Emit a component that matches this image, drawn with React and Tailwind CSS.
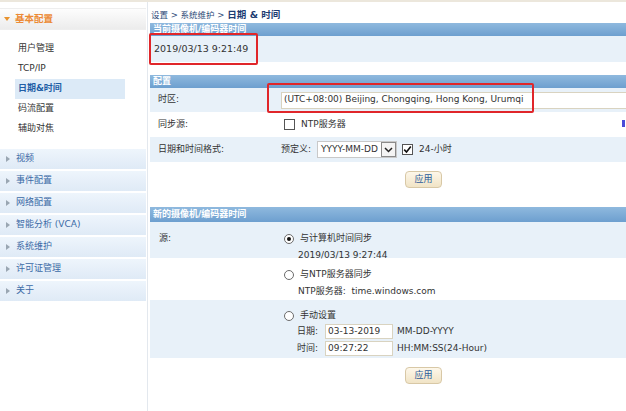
import React from "react";

const font = { fontFamily: '"DejaVu Sans", Verdana, "Noto Sans CJK SC", sans-serif' };

function SideSection({ label }) {
  return (
    <div className="h-[20px] mb-[2px] flex items-center bg-gradient-to-b from-[#eef5fc] to-[#dfeaf6] pl-[6px]">
      <span className="w-0 h-0 border-y-[3px] border-y-transparent border-l-[4px] border-l-[#9aa6b2] mr-[6px]" />
      <span className="text-[9px] text-[#3b6aa6]">{label}</span>
    </div>
  );
}

function Header({ children, h = "h-[14px]" }) {
  return (
    <div className={`${h} flex items-center bg-gradient-to-b from-[#8fb9de] to-[#6d9fcf] pl-[3px] text-[9px] font-bold text-white leading-none`}>
      {children}
    </div>
  );
}

function Radio({ checked }) {
  return (
    <span className="w-[10px] h-[10px] rounded-full border border-[#6b6b6b] bg-white flex items-center justify-center shrink-0">
      {checked && <span className="w-[4px] h-[4px] rounded-full bg-[#111]" />}
    </span>
  );
}

function Checkbox({ checked }) {
  return (
    <span className="w-[11px] h-[11px] border border-[#555] bg-white flex items-center justify-center shrink-0">
      {checked && (
        <svg width="9" height="9" viewBox="0 0 9 9">
          <path d="M1.2 4.6 L3.5 7 L7.8 1.5" fill="none" stroke="#111" strokeWidth="1.6" />
        </svg>
      )}
    </span>
  );
}

function ApplyBtn() {
  return (
    <div className="flex pl-[255px]">
      <div className="w-[37px] h-[17px] rounded-[4px] border border-[#d8c8a6] bg-gradient-to-b from-[#fdf7ea] to-[#f1e4c6] flex items-center justify-center text-[9px] text-[#2a5a9a]">
        应用
      </div>
    </div>
  );
}

export default function App() {
  return (
    <div className="w-[626px] h-[411px] overflow-hidden bg-white relative border-t-[2px] border-[#ece7dc] text-[#333]" style={font}>
      <div className="flex h-full">
        {/* Sidebar */}
        <div className="w-[146px] shrink-0 pt-[6px]">
          <div className="h-[22px] flex items-center bg-gradient-to-b from-[#fdfdfd] to-[#ececec] border-y border-[#eeeeee] pl-[4px]">
            <span className="w-0 h-0 border-x-[3px] border-x-transparent border-t-[4px] border-t-[#e8922e] mr-[5px]" />
            <span className="text-[9.5px] font-bold text-[#ec8a35]">基本配置</span>
          </div>
          <div className="pt-[9px] pb-[10px] text-[9px] text-[#333]">
            <div className="h-[20px] flex items-center pl-[18px]">用户管理</div>
            <div className="h-[20px] flex items-center pl-[18px]">TCP/IP</div>
            <div className="h-[20px] flex items-center pl-[3px] ml-[15px] w-[110px] bg-[#dceaf7] text-[#1f5ea6] font-bold">日期&amp;时间</div>
            <div className="h-[20px] flex items-center pl-[18px]">码流配置</div>
            <div className="h-[20px] flex items-center pl-[18px]">辅助对焦</div>
          </div>
          <SideSection label="视频" />
          <SideSection label="事件配置" />
          <SideSection label="网络配置" />
          <SideSection label="智能分析 (VCA)" />
          <SideSection label="系统维护" />
          <SideSection label="许可证管理" />
          <SideSection label="关于" />
        </div>
        <div className="w-[1px] bg-[#e3e8ee] ml-[1px]" />
        {/* Main */}
        <div className="flex-1 ml-[2px] overflow-hidden">
          <div className="h-[21px] flex items-end pb-[1px] pl-[1px] text-[#2c4a78]">
            <span className="text-[8.5px]">设置 &gt; 系统维护 &gt;</span>
            <span className="text-[9.5px] font-bold text-[#1d3c72] ml-[3px]">日期 &amp; 时间</span>
          </div>
          <Header h="h-[13px]">当前摄像机/编码器时间</Header>
          <div className="h-[26px] bg-[#e8f1f9] flex items-center pl-[4px] text-[9.5px]">2019/03/13 9:21:49</div>
          <div className="h-[13px]" />
          <Header h="h-[13px]">配置</Header>
          <div className="h-[24px] bg-[#e8f1f9] flex items-center text-[9px]">
            <div className="w-[131px] pl-[8px] shrink-0">时区:</div>
            <div className="h-[17px] w-[500px] shrink-0 bg-white border border-[#d9d3c0] flex items-center pl-[2px]">
              (UTC+08:00) Beijing, Chongqing, Hong Kong, Urumqi
            </div>
          </div>
          <div className="h-[25px] flex items-center text-[9px] relative">
            <div className="w-[134px] pl-[8px] shrink-0">同步源:</div>
            <Checkbox />
            <span className="ml-[6px]">NTP服务器</span>
            <span className="absolute right-[1px] top-[8px] w-[3px] h-[7px] bg-[#4a4ad8]" />
          </div>
          <div className="h-[25px] bg-[#e8f1f9] flex items-center text-[9px]">
            <div className="w-[131px] pl-[8px] shrink-0">日期和时间格式:</div>
            <span>预定义:</span>
            <div className="ml-[6px] h-[17px] w-[80px] bg-white border border-[#c9c9c9] flex items-center">
              <span className="pl-[3px] flex-1">YYYY-MM-DD</span>
              <span className="w-[15px] h-[15px] border border-[#8a8a8a] flex items-center justify-center bg-[#f4f4f4]">
                <svg width="9" height="6" viewBox="0 0 9 6">
                  <path d="M1 1 L4.5 4.5 L8 1" fill="none" stroke="#222" strokeWidth="1.5" />
                </svg>
              </span>
            </div>
            <span className="ml-[5px]"><Checkbox checked /></span>
            <span className="ml-[6px]">24-小时</span>
          </div>
          <div className="pt-[9px] h-[45px]">
            <ApplyBtn />
          </div>
          <Header h="h-[15px]">新的摄像机/编码器时间</Header>
          <div className="h-[36px] bg-[#e8f1f9] flex text-[9px] pt-[12px]">
            <div className="w-[134px] pl-[9px] shrink-0 -mt-[2px]">源:</div>
            <div className="flex flex-col">
              <div className="flex items-center h-[10px]">
                <Radio checked />
                <span className="ml-[6px] -mt-[1px]">与计算机时间同步</span>
              </div>
              <div className="mt-[5px] ml-[14px]">2019/03/13 9:27:44</div>
            </div>
          </div>
          <div className="h-[42px] flex text-[9px] pt-[12px]">
            <div className="w-[134px] shrink-0" />
            <div className="flex flex-col">
              <div className="flex items-center h-[10px]">
                <Radio />
                <span className="ml-[6px] -mt-[1px]">与NTP服务器同步</span>
              </div>
              <div className="mt-[5px] ml-[14px]">NTP服务器:&nbsp;&nbsp;time.windows.com</div>
            </div>
          </div>
          <div className="h-[58px] bg-[#e8f1f9] flex text-[9px] pt-[11px]">
            <div className="w-[134px] shrink-0" />
            <div className="flex flex-col">
              <div className="flex items-center h-[10px]">
                <Radio />
                <span className="ml-[6px] -mt-[1px]">手动设置</span>
              </div>
              <div className="mt-[3px] ml-[13px] flex items-center h-[15px]">
                <span className="w-[28px]">日期:</span>
                <span className="w-[68px] h-[15px] bg-white border border-[#d9d3c0] flex items-center pl-[2px]">03-13-2019</span>
                <span className="ml-[4px]">MM-DD-YYYY</span>
              </div>
              <div className="mt-[2px] ml-[13px] flex items-center h-[15px]">
                <span className="w-[28px]">时间:</span>
                <span className="w-[68px] h-[15px] bg-white border border-[#d9d3c0] flex items-center pl-[2px]">09:27:22</span>
                <span className="ml-[4px]">HH:MM:SS(24-Hour)</span>
              </div>
            </div>
          </div>
          <div className="pt-[9px]">
            <ApplyBtn />
          </div>
        </div>
      </div>
      {/* red annotation boxes */}
      <div className="absolute left-[149px] top-[31px] w-[109px] h-[32px] border-[2px] border-[#e0262a] rounded-[2px]" />
      <div className="absolute left-[267px] top-[81px] w-[267px] h-[30px] border-[2px] border-[#e0262a] rounded-[2px]" />
    </div>
  );
}
